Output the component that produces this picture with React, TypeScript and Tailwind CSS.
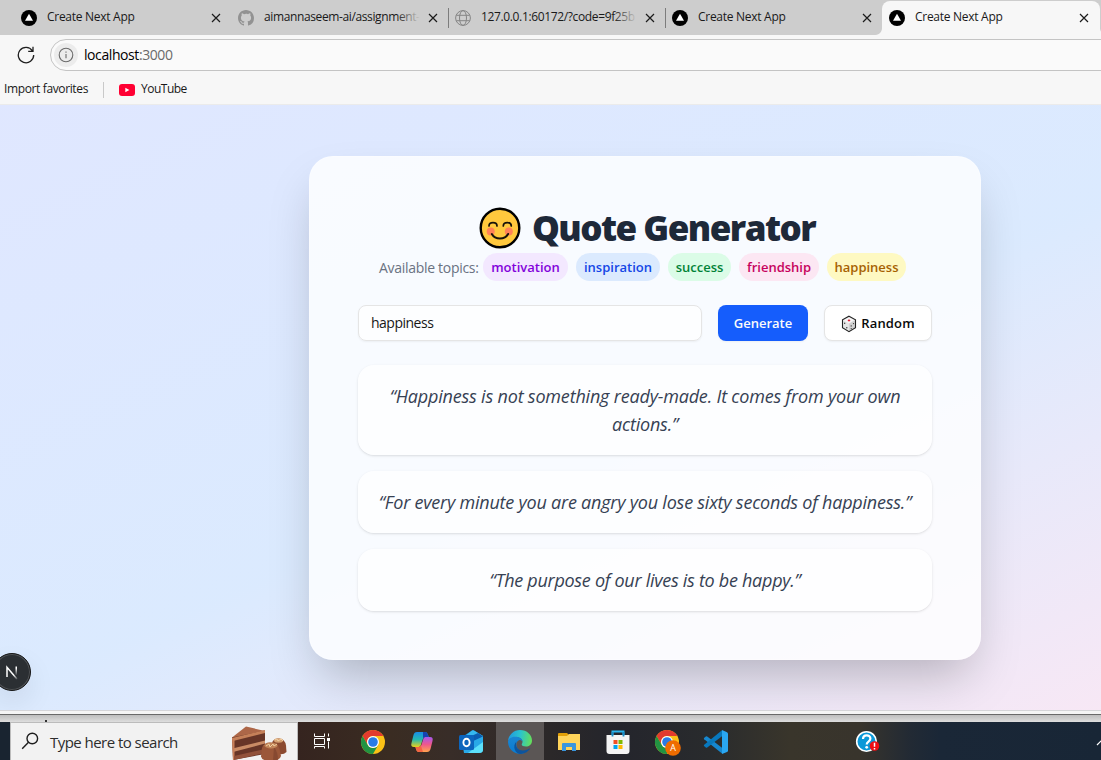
import React from "react";

function NextMark() {
  return (
    <svg width="16" height="16" viewBox="0 0 16 16" className="shrink-0">
      <circle cx="8" cy="8" r="8" fill="#000" />
      <path d="M8 3.8 12 10.7H4Z" fill="#fff" />
    </svg>
  );
}

function GithubMark() {
  return (
    <svg width="16" height="16" viewBox="0 0 16 16" fill="#929292" className="shrink-0">
      <path d="M8 0C3.58 0 0 3.58 0 8c0 3.54 2.29 6.53 5.47 7.59.4.07.55-.17.55-.38 0-.19-.01-.82-.01-1.49-2.01.37-2.53-.49-2.69-.94-.09-.23-.48-.94-.82-1.13-.28-.15-.68-.52-.01-.53.63-.01 1.08.58 1.23.82.72 1.21 1.87.87 2.33.66.07-.52.28-.87.51-1.07-1.78-.2-3.64-.89-3.64-3.95 0-.87.31-1.59.82-2.15-.08-.2-.36-1.02.08-2.12 0 0 .67-.21 2.2.82A7.6 7.6 0 0 1 8 3.87c.68 0 1.36.09 2 .27 1.53-1.04 2.2-.82 2.2-.82.44 1.1.16 1.92.08 2.12.51.56.82 1.27.82 2.15 0 3.07-1.87 3.75-3.65 3.95.29.25.54.73.54 1.48 0 1.07-.01 1.93-.01 2.2 0 .21.15.46.55.38A8.01 8.01 0 0 0 16 8c0-4.42-3.58-8-8-8Z" />
    </svg>
  );
}

function GlobeMark() {
  return (
    <svg width="16" height="16" viewBox="0 0 16 16" fill="none" stroke="#858585" strokeWidth="1" className="shrink-0">
      <circle cx="8" cy="8" r="7.4" />
      <ellipse cx="8" cy="8" rx="3.5" ry="7.4" />
      <path d="M1.3 5.3h13.4M1.3 10.7h13.4" />
    </svg>
  );
}

function CloseMark() {
  return (
    <svg width="10" height="10" viewBox="0 0 10 10" stroke="#1b1b1b" strokeWidth="1.2" className="shrink-0">
      <path d="m1 1 8 8M9 1 1 9" />
    </svg>
  );
}

type TabProps = {
  icon: React.ReactNode;
  title: string;
  titleClass?: string;
  divider?: boolean;
  fade?: string;
};

function Tab({ icon, title, titleClass = "tracking-[-0.28px]", divider, fade }: TabProps) {
  return (
    <div className="relative flex h-[35px] w-[217px] shrink-0 items-center pl-[5px]">
      {divider && <div className="absolute top-[8px] left-[-2px] h-[20px] w-px bg-[#7c7c7c]" />}
      {icon}
      <div className="relative -mt-[2px] ml-[10px] w-[156px] overflow-hidden whitespace-nowrap text-[12px] leading-[18px] text-[#191919]">
        <span className={titleClass}>{title}</span>
        {fade && <div className={fade} />}
      </div>
      <div className="ml-[8px] flex"><CloseMark /></div>
    </div>
  );
}

const FADE = "absolute top-0 right-0 h-full w-[24px] bg-linear-to-r from-[#cdcdcd]/0 to-[#cdcdcd]";

function BrowserChrome() {
  return (
    <header className="h-[105px] w-full overflow-hidden bg-[#f7f7f7]">
      <div className="flex h-[35px] bg-[#cdcdcd] pl-[16px]">
        <Tab icon={<NextMark />} title="Create Next App" />
        <Tab icon={<GithubMark />} title="aimannaseem-ai/assignment-" titleClass="tracking-[-0.38px]" fade={FADE} />
        <Tab icon={<GlobeMark />} title="127.0.0.1:60172/?code=9f25b" titleClass="tracking-[-0.36px]" divider fade={FADE} />
        <Tab icon={<NextMark />} title="Create Next App" divider />
        <div className="relative -ml-[2px] mt-px h-[34px] w-[218px] shrink-0 rounded-t-[8px] bg-[#f7f7f7]">
          <div className="absolute bottom-0 -left-[7px] h-[7px] w-[7px] bg-[radial-gradient(circle_at_0_0,#cdcdcd_6.5px,#f7f7f7_7.5px)]" />
          <div className="absolute right-[-7px] bottom-0 h-[7px] w-[7px] bg-[radial-gradient(circle_at_100%_0,#cdcdcd_6.5px,#f7f7f7_7.5px)]" />
          <div className="-mt-px pl-[2px]"><Tab icon={<NextMark />} title="Create Next App" /></div>
        </div>
      </div>
      <div className="flex h-[40px] items-center">
        <svg width="18" height="18" viewBox="0 0 18 18" fill="none" stroke="#1f1f1f" strokeWidth="1.3" className="ml-[17px] shrink-0">
          <path d="M15.4 4.8A7.7 7.7 0 1 0 16.7 9M16 .8v4.6h-4.800" />
        </svg>
        <div className="ml-[15px] -mr-[10px] flex h-[32px] flex-1 items-center rounded-l-full border border-[#c4c4c4] bg-[#fafafa]">
          <div className="ml-[3px] flex h-[24px] w-[24px] items-center justify-center rounded-full bg-[#ececec]">
            <svg width="16" height="16" viewBox="0 0 16 16" fill="none" stroke="#6b6b6b" strokeWidth="1.1">
              <circle cx="8" cy="8" r="6.8" />
              <path d="M8 7v4.3M8 4.5v1.3" />
            </svg>
          </div>
          <div className="ml-[6px] text-[14px] leading-[20px] tracking-[-0.42px] text-black">
            localhost<span className="text-[#6a6a6a]">:3000</span>
          </div>
        </div>
      </div>
      <div className="flex h-[29px] items-center text-[12px] text-[#191919]">
        <span className="-mt-[2px] w-[89px] whitespace-nowrap pl-[4px] tracking-[-0.37px]">Import favorites</span>
        <div className="ml-[14px] h-[16px] w-px bg-[#c9c9c9]" />
        <svg width="16" height="12" viewBox="0 0 16 12" className="ml-[15px] shrink-0">
          <rect width="16" height="12" rx="3" fill="#ff0033" />
          <path d="M6.3 3.7 10.4 6 6.3 8.3Z" fill="#fff" />
        </svg>
        <span className="-mt-[2px] ml-[6px] tracking-[-0.5px]">YouTube</span>
      </div>
      <div className="h-px bg-[#ebebeb]" />
    </header>
  );
}

function SmileFace() {
  return (
    <svg width="42" height="42" viewBox="0 0 42 42" className="-mt-[3px] shrink-0">
      <circle cx="21" cy="21" r="19.3" fill="#ffc83d" stroke="#000" strokeWidth="2.4" />
      <circle cx="11.7" cy="24.5" r="4" fill="#ff8257" />
      <circle cx="29.8" cy="24.5" r="4" fill="#ff8257" />
      <g fill="none" stroke="#17130a" strokeWidth="1.7" strokeLinecap="round">
        <path d="M10 19q0-3.3 4-3.3t4 3.3M24.3 19q0-3.3 4-3.3t4 3.3" />
        <path d="M12.8 27c3.4 6.1 13 6.1 16.3 0" strokeWidth="2" />
      </g>
    </svg>
  );
}

function Dice() {
  return (
    <svg width="16" height="18" viewBox="0 0 16 18" className="shrink-0">
      <path d="M8 1.2 14.5 4.8v8L8 16.6l-6.5-3.8v-8Z" fill="#f5f5f5" />
      <path d="M8 8.5 14.5 4.8v8L8 16.6Z" fill="#d1d1d1" />
      <path d="M1.5 4.8 8 8.5v8.1l-6.5-3.8Z" fill="#e5e5e5" />
      <path d="M8 1.2 14.5 4.8v8L8 16.6l-6.5-3.8v-8Z" fill="none" stroke="#222" strokeWidth="1.1" />
      <ellipse cx="8" cy="5.4" rx="1.3" ry=".9" fill="#e51d35" />
      <g fill="#333">
        <circle cx="3.7" cy="8.3" r=".7" />
        <circle cx="5.8" cy="12.7" r=".7" />
        <circle cx="10.2" cy="10.9" r=".65" />
        <circle cx="12.5" cy="8.6" r=".6" />
        <circle cx="10.2" cy="13.6" r=".6" />
      </g>
    </svg>
  );
}

const topics = [
  { label: "motivation", cls: "w-[85px] bg-purple-100 text-purple-700" },
  { label: "inspiration", cls: "w-[84px] bg-blue-100 text-blue-700" },
  { label: "success", cls: "w-[63px] bg-green-100 text-green-700" },
  { label: "friendship", cls: "w-[80px] bg-pink-100 text-pink-700" },
  { label: "happiness", cls: "w-[79px] bg-yellow-100 text-yellow-700" },
];

const quotes = [
  { lines: ["“Happiness is not something ready-made. It comes from your own", "actions.”"], cls: "tracking-[-0.19px]" },
  { lines: ["“For every minute you are angry you lose sixty seconds of happiness.”"], cls: "tracking-[-0.22px]" },
  { lines: ["“The purpose of our lives is to be happy.”"], cls: "tracking-[-0.28px]" },
];

function QuotePage() {
  return (
    <main className="relative h-[605px] w-full overflow-hidden">
      <div className="-ml-[26px] flex h-[605px] w-[1342px] items-start justify-center bg-linear-to-br from-indigo-100 via-blue-100 to-pink-100 pt-[51px]">
        <section className="h-[504px] w-[672px] rounded-3xl border border-white/30 bg-white/80 px-[48px] pt-[48px] shadow-2xl">
          <h1 className="flex h-[48px] items-center pl-[121px] text-[36px] font-extrabold leading-[48px] text-gray-800">
            <SmileFace />
            <span className="-mt-[3px] ml-[11px] whitespace-nowrap text-[35px] tracking-[-1.530px]">Quote Generator</span>
          </h1>
          <div className="flex h-[28px] items-center pl-[21px] text-[14px] text-gray-500">
            <span className="w-[104px] whitespace-nowrap tracking-[-0.3px]">Available topics:</span>
            <div className="flex gap-[8px]">
              {topics.map((t) => (
                <span key={t.label} className={`flex h-[28px] items-center justify-center rounded-full pt-px text-[13px] font-semibold ${t.cls}`}>
                  {t.label}
                </span>
              ))}
            </div>
          </div>
          <div className="mt-[24px] flex gap-[16px]">
            <div className="flex h-[36px] w-[344px] items-center rounded-lg border border-[#e5e5e5] bg-white/70 pb-px pl-[12px] text-[14px] tracking-[-0.5px] text-neutral-900 shadow-xs">
              happiness
            </div>
            <button className="h-[36px] w-[90px] rounded-lg bg-[#155dfc] pt-px text-[13px] font-semibold text-neutral-50 shadow-xs">Generate</button>
            <button className="flex h-[36px] w-[108px] items-center justify-center gap-[4px] rounded-lg border border-[#e5e5e5] bg-white pt-px text-[13px] font-semibold text-neutral-950 shadow-xs">
              <Dice />
              <span className="tracking-[0.15px]">Random</span>
            </button>
          </div>
          <div className="mt-[24px] flex flex-col gap-[16px]">
            {quotes.map((q) => (
              <blockquote key={q.lines[0]} className="rounded-2xl bg-white/70 py-[17px] text-center text-[18px] italic leading-[28px] text-gray-700 shadow-sm">
                {q.lines.map((l) => (
                  <div key={l} className={`whitespace-nowrap ${q.cls}`}>{l}</div>
                ))}
              </blockquote>
            ))}
          </div>
        </section>
      </div>
      <div className="absolute bottom-[19px] -left-[7px] flex h-[38px] w-[38px] items-center justify-center rounded-full border border-[#171717] bg-[#2b2f33] shadow-[inset_0_0_0_1px_#515457,0_12px_28px_rgba(0,0,0,0.08)]">
        <svg width="14" height="16" viewBox="0 0 14 16" fill="none">
          <defs>
            <linearGradient id="nfade" x1="0" y1="0" x2="0" y2="1">
              <stop offset=".2" stopColor="#fff" />
              <stop offset="1" stopColor="#fff" stopOpacity="0" />
            </linearGradient>
            <linearGradient id="nleg" x1="0" y1="0" x2="1" y2="1">
              <stop offset=".65" stopColor="#fff" />
              <stop offset="1" stopColor="#fff" stopOpacity=".2" />
            </linearGradient>
          </defs>
          <path d="M2 13V3.200L12 15" stroke="url(#nleg)" strokeWidth="1.5" />
          <rect x="10.5" y="2.500" width="1.5" height="9" fill="url(#nfade)" />
        </svg>
      </div>
    </main>
  );
}

function Cake() {
  return (
    <svg width="56" height="36" viewBox="0 0 56 36" className="shrink-0">
      <path d="M1 12.500 15 1.500 34 6 2 15Z" fill="#ad6748" />
      <path d="M1 12.500 34 5.500V29L2 35Z" fill="#673527" />
      <path d="M1 13 34 5v3L2 16Z" fill="#c58059" />
      <path d="M1.500 23.500 34 15.500v3L2 27Z" fill="#c98b65" />
      <path d="M1 13h2.500v22H2Z" fill="#c9805a" />
      <path d="M3 31 34 24v4L3 35Z" fill="#91513a" />
      <path d="M41 18q1-4.500 7-4.500 6 .500 7 7l.5 6.500q-3 3-8 2Z" fill="#8b4a30" />
      <ellipse cx="47.500" cy="15.500" rx="4.500" ry="2.200" fill="#d5a071" />
      <path d="M31 23q1.500-5.500 8-5.500 8 0 9.500 6.500l1.500 7q-1 5-10 5t-10-4.500Z" fill="#9b5739" />
      <path d="M43 22q4 5 4 13l-5 1Z" fill="#733b29" opacity=".5" />
      <ellipse cx="40" cy="20.500" rx="6.500" ry="3" fill="#c18458" />
      <path d="m35 21 3-2 1 3 3-3 1 2 3-2M44 15l2-1 1 2 3-2 2 2" stroke="#f1cfa0" fill="none" />
    </svg>
  );
}

function Chrome({ badge }: { badge?: boolean }) {
  return (
    <svg width="26" height="26" viewBox="0 0 26 26" overflow="visible">
      <circle cx="13" cy="13" r="12" fill="#fbc116" />
      <path d="M2.600 7A12 12 0 0 1 23.400 7H13a6 6 0 0 0-5.200 9Z" fill="#e33b2e" />
      <path d="M2.600 7A12 12 0 0 0 13 25l5.200-9A6 6 0 0 1 7.800 16Z" fill="#229342" />
      <circle cx="13" cy="13" r="6" fill="#fff" />
      <circle cx="13" cy="13" r="4.800" fill="#2a7be4" />
      {badge && (
        <>
          <circle cx="19" cy="19" r="7.800" fill="#ef6c00" />
          <text x="19" y="22.400" textAnchor="middle" fontSize="9" fill="#fff" fontFamily="Open Sans, sans-serif">A</text>
        </>
      )}
    </svg>
  );
}

function TaskView() {
  return (
    <svg width="18" height="18" viewBox="0 0 18 18" fill="none" stroke="#fff" strokeWidth="1" className="-ml-[3px]">
      <path d="M1.500 1.500v3h10v-3M1.500 16.500v-2h10v2M1.500 6.500h10v6h-10zM15.500 1.500v3M15.500 9.500v7" />
      <rect x="14.500" y="6.500" width="2" height="2" fill="#fff" />
    </svg>
  );
}

function Copilot() {
  return (
    <svg width="24" height="24" viewBox="0 0 24 24">
      <defs>
        <linearGradient id="cpa" x1="0" y1="0" x2="0" y2="1">
          <stop stopColor="#188be8" />
          <stop offset=".5" stopColor="#25b8b0" />
          <stop offset="1" stopColor="#ead11b" />
        </linearGradient>
        <linearGradient id="cpb" x1="0" y1="0" x2="0" y2="1">
          <stop stopColor="#a557ef" />
          <stop offset=".5" stopColor="#ef588c" />
          <stop offset="1" stopColor="#ffa44e" />
        </linearGradient>
      </defs>
      <path d="M7 2h8c2 0 2.500 1.500 3 3l.8 2h-3c-2 0-2.700 1-3.300 3l-1.600 5c-.6 1.500-1.400 2-3 2H4c-2.500 0-3.200-1.500-2.500-4l2-8C4.100 3 5 2 7 2Z" fill="url(#cpa)" />
      <path d="M13 2h2c2 0 2.500 1.500 3 3l.8 2h-3c-1.500 0-2.300.500-2.800 1.500Z" fill="#1543b2" />
      <path d="M17 22H9c-2 0-2.600-1.500-3-3l-.6-2h3c2 0 2.700-1 3.300-3l1.600-5c.6-1.500 1.400-2 3-2H20c2.500 0 3.200 1.500 2.500 4l-2 8c-.6 2-1.500 3-3.500 3Z" fill="url(#cpb)" />
      <path d="M5.400 17h3c1.200 0 2-.5 2.500-1.200L13 22H9c-2 0-2.600-1.500-3-3Z" fill="#f46442" />
    </svg>
  );
}

function Outlook() {
  return (
    <svg width="26" height="26" viewBox="0 0 26 26">
      <path d="M4 8 14 1.500q1-.700 2 0L25 7v4H4Z" fill="#1684cf" />
      <path d="M7 7 14 1.500q1-.700 2 0L25 7l-8 5Z" fill="#35b8ef" />
      <path d="M9 9 20 4l5 3.500L13 16Z" fill="#0b5caf" />
      <path d="M4 13h9L25 7.500V20q0 4-4 4H6Z" fill="#29a9e7" />
      <path d="m10 24 15-11v8q0 3-4 3Z" fill="#5ce0fa" />
      <rect x="1" y="6" width="15" height="15" rx="1.500" fill="#0c65bd" />
      <ellipse cx="8.500" cy="13.500" rx="3.100" ry="3.700" fill="none" stroke="#fff" strokeWidth="1.900" />
    </svg>
  );
}

function Edge() {
  return (
    <svg width="26" height="26" viewBox="0 0 26 26">
      <defs>
        <linearGradient id="eg" x1="0" y1=".4" x2="1" y2=".5">
          <stop stopColor="#2098df" />
          <stop offset=".5" stopColor="#2bc4cc" />
          <stop offset="1" stopColor="#65df5a" />
        </linearGradient>
        <linearGradient id="eb" x1="0" y1="0" x2="0" y2="1">
          <stop stopColor="#1b86d2" />
          <stop offset="1" stopColor="#087bd1" />
        </linearGradient>
      </defs>
      <path d="M1 12A12 12 0 0 1 13 1c7 0 12 5 12 10.500 0 4-3 6-6 6-2.700 0-4.300-1-4.300-2 0-.700.800-1.200.800-2.800 0-2.400-2.500-4.500-6-4.500C5.500 8.200 2 10 1 12Z" fill="url(#eg)" />
      <path d="M1 13c0-3 3-5.300 7-5.300 4.200 0 7.500 2 7.500 4.800-.5-1-2-1.500-3-1.500-3 1-4 4-2.500 7.500 1.500 3.300 4.500 5 8 5.200A12 12 0 0 1 1 13Z" fill="url(#eb)" />
      <path d="M9.500 12.500c-1.800 4 .8 9 6.500 9 2.800 0 5.200-1 7.500-2.400A12 12 0 0 1 14 25c-6 0-9-8-4.500-12.500Z" fill="#0d549d" />
    </svg>
  );
}

function Explorer() {
  return (
    <svg width="24" height="22" viewBox="0 0 24 22">
      <path d="M1 3q0-1 1-1h8l2 2v3H1Z" fill="#e2a008" />
      <path d="M1 5h9l2-2h11v16H1Z" fill="#ffd45a" />
      <path d="M5 20v-7q0-1 1-1h12q1 0 1 1v7h-4v-4H9v4Z" fill="#3a96dd" />
    </svg>
  );
}

function Store() {
  return (
    <svg width="26" height="26" viewBox="0 0 26 26">
      <path d="M7.500 7V2.500h11V7" fill="none" stroke="#29b6ef" strokeWidth="2" />
      <path d="M1.500 6h23v16q0 3-3 3h-17q-3 0-3-3Z" fill="#f4f4f4" />
      <path d="M7.500 7.500V3M18.500 7.500V3" stroke="#188bc6" strokeWidth="1.800" />
      <path fill="#f25022" d="M8.500 11h4v4h-4z" />
      <path fill="#7fba00" d="M13.500 11h4v4h-4z" />
      <path fill="#00a4ef" d="M8.500 16h4v4h-4z" />
      <path fill="#ffb900" d="M13.500 16h4v4h-4z" />
    </svg>
  );
}

function VsCode() {
  return (
    <svg width="26" height="26" viewBox="0 0 26 26">
      <path d="m1 9 1.800-1.600q.700-.5 1.400 0L19 18.800V24.500L1.200 10.200Q.500 9.500 1 9Z" fill="#1687cf" />
      <path d="m1 17 1.800 1.600q.700.5 1.400 0L19 7.300V1.300L1.200 15.800Q.500 16.500 1 17Z" fill="#0878bd" />
      <path d="M19 1.100 24 3.200q1 .500 1 1.600v16.600q0 1-1 1.500L19 25Z" fill="#2aa7f2" />
    </svg>
  );
}

function HelpMark() {
  return (
    <svg width="26" height="26" viewBox="0 0 26 26">
      <circle cx="11.500" cy="12.500" r="9.800" fill="#0b98d8" stroke="#fff" strokeWidth="1.600" />
      <path d="M8 10c0-5 7.400-4.700 7.400-.4 0 3-3.700 2.900-3.700 5.800" fill="none" stroke="#fff" strokeWidth="2.200" />
      <circle cx="11.700" cy="18.300" r="1.400" fill="#fff" />
      <circle cx="19.500" cy="17" r="4.800" fill="#ef0d14" />
      <path d="M19.500 13.800v4M19.500 19v1.400" stroke="#fff" strokeWidth="1.500" />
    </svg>
  );
}

function Cell({ children, active }: { children: React.ReactNode; active?: boolean }) {
  return (
    <div className={active ? "flex h-[38px] w-[49px] shrink-0 items-center justify-center border-l border-transparent bg-[#5b5655] bg-clip-padding pt-[2px]" : "flex h-[38px] w-[49px] shrink-0 items-center justify-center pt-[2px]"}>
      {children}
    </div>
  );
}

function Taskbar() {
  return (
    <footer className="flex h-[38px] w-full overflow-hidden bg-[linear-gradient(90deg,#192430_0px,#192430_10px,#35241f_298px,#3a2c22_390px,#382d28_450px,#2b2829_550px,#24252c_620px,#292b2d_710px,#39352b_790px,#38342c_860px,#222a34_910px,#1a2737_940px,#182636_1101px)]">
      <div className="ml-[10px] flex h-[38px] w-[288px] shrink-0 items-center border border-b-0 border-[#bcbcbc] bg-[#f2f2f2] pt-[2px]">
        <svg width="18" height="18" viewBox="0 0 18 18" fill="none" stroke="#1d1d1d" strokeWidth="1.400" className="ml-[10px] -mt-[3px] shrink-0">
          <circle cx="11.300" cy="6.500" r="5.300" />
          <path d="m7.500 10.300-6.300 6.500" />
        </svg>
        <span className="ml-[11px] w-[160px] whitespace-nowrap text-[15px] tracking-[-0.54px] text-[#2d2d2d]">Type here to search</span>
        <div className="ml-[21px]"><Cake /></div>
      </div>
      <div className="flex w-[50px] shrink-0 items-center justify-center"><TaskView /></div>
      <Cell><Chrome /></Cell>
      <Cell><Copilot /></Cell>
      <Cell><Outlook /></Cell>
      <Cell active><Edge /></Cell>
      <Cell><Explorer /></Cell>
      <Cell><Store /></Cell>
      <Cell><Chrome badge /></Cell>
      <Cell><VsCode /></Cell>
      <div className="ml-[115px] flex items-center pt-[2px]"><HelpMark /></div>
      <svg width="12" height="8" viewBox="0 0 12 8" fill="none" stroke="#fff" strokeWidth="1.200" className="mt-[17px] ml-[215px] shrink-0">
        <path d="m1 6 5-5 5 5" />
      </svg>
    </footer>
  );
}

export default function App() {
  return (
    <div className="flex h-[760px] w-[1101px] flex-col overflow-hidden font-['Open_Sans','Noto_Sans',sans-serif]">
      <BrowserChrome />
      <QuotePage />
      <div className="h-[12px] w-full shrink-0">
        <div className="h-px bg-[#d5d5d8]" />
        <div className="h-[3px] bg-[#f5f5f5]" />
        <div className="h-px bg-[#696969]" />
        <div className="h-[7px] bg-linear-to-b from-[#bebebe] to-[#dedede] pl-[45px]">
          <div className="h-[5px]" />
          <div className="h-[2px] w-[2px] bg-[#333]" />
        </div>
      </div>
      <Taskbar />
    </div>
  );
}
